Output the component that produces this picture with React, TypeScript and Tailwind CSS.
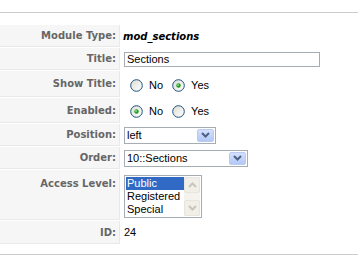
import React from "react";

const labelFont = { fontFamily: '"DejaVu Sans", Verdana, sans-serif' };

function Radio({ checked }: { checked?: boolean }) {
  return (
    <svg width="13" height="13" viewBox="0 0 13 13" className="shrink-0">
      <defs>
        <linearGradient id="rg" x1="0" y1="0" x2="1" y2="1">
          <stop offset="0" stopColor="#dcdcd5" />
          <stop offset="1" stopColor="#ffffff" />
        </linearGradient>
      </defs>
      <circle cx="6.5" cy="6.5" r="5.8" fill="url(#rg)" stroke="#1c5180" strokeWidth="1" />
      {checked && <circle cx="6.5" cy="6.5" r="2.2" fill="#21a121" />}
      {checked && <circle cx="6" cy="6" r="0.9" fill="#8ee08e" />}
    </svg>
  );
}

function DropButton() {
  return (
    <div className="w-[17px] h-full flex items-center justify-center rounded-[2px] border border-[#b9cbf5] bg-gradient-to-b from-[#d4e0fd] to-[#b3c8f6]">
      <svg width="9" height="6" viewBox="0 0 9 6">
        <path d="M1 1 L4.5 4.5 L8 1" fill="none" stroke="#4d6185" strokeWidth="2" />
      </svg>
    </div>
  );
}

function Select({ width, value }: { width: string; value: string }) {
  return (
    <div className={`${width} h-[17px] border border-[#a5acb2] bg-white flex items-stretch p-[1px]`}>
      <div className="flex-1 pl-[1px] leading-[13px] text-[11px] text-black">{value}</div>
      <DropButton />
    </div>
  );
}

function Row({ label, height, top, children }: { label: string; height: string; top?: boolean; children: React.ReactNode }) {
  return (
    <div className={`flex gap-[1px] ${height}`}>
      <div
        className={`w-[120px] shrink-0 bg-[#f6f6f6] border-b border-r border-[#e9e9e9] flex justify-end pr-[3px] text-[10px] font-bold text-[#666] ${top ? "items-start pt-[6px]" : "items-center"}`}
        style={labelFont}
      >
        {label}
      </div>
      <div className={`flex-1 pl-[3px] flex ${top ? "items-start pt-[5px]" : "items-center"}`}>{children}</div>
    </div>
  );
}

function RadioPair({ yes }: { yes: boolean }) {
  return (
    <div className="flex items-center text-[11px] text-black pl-[6px] pt-[2px]">
      <Radio checked={!yes} />
      <span className="ml-[6px] mr-[9px]">No</span>
      <Radio checked={yes} />
      <span className="ml-[6px]">Yes</span>
    </div>
  );
}

export default function App() {
  return (
    <div className="w-[358px] h-[263px] bg-white overflow-hidden" style={{ fontFamily: '"Liberation Sans", Arial, sans-serif' }}>
      <div className="h-[12px]" />
      <div className="border-t border-[#cccccc]" />
      <div className="mt-[12px] flex flex-col gap-[1px]">
        <Row label="Module Type:" height="h-[22px]">
          <span className="text-[10px] font-bold italic text-black -ml-[1px]" style={labelFont}>
            mod_sections
          </span>
        </Row>
        <Row label="Title:" height="h-[22px]">
          <div className="w-[196px] h-[15px] border border-[#a5acb2] bg-white text-[11px] leading-[13px] pl-[2px] text-black">
            Sections
          </div>
        </Row>
        <Row label="Show Title:" height="h-[26px]">
          <RadioPair yes={true} />
        </Row>
        <Row label="Enabled:" height="h-[25px]">
          <RadioPair yes={false} />
        </Row>
        <Row label="Position:" height="h-[22px]">
          <Select width="w-[92px]" value="left" />
        </Row>
        <Row label="Order:" height="h-[22px]">
          <Select width="w-[124px]" value="10::Sections" />
        </Row>
        <Row label="Access Level:" height="h-[50px]" top>
          <div className="w-[78px] h-[43px] border border-[#a5acb2] bg-white flex p-[1px]">
            <div className="flex-1 text-[11px] leading-[13px] text-black">
              <div className="bg-[#316ac5] text-white pl-[1px]">Public</div>
              <div className="pl-[1px]">Registered</div>
              <div className="pl-[1px]">Special</div>
            </div>
            <div className="w-[16px] bg-[#f4f3ee] flex flex-col justify-between">
              <div className="h-[16px] border border-[#e6e5de] rounded-[2px] bg-[#f0efe8] flex items-center justify-center">
                <svg width="9" height="6" viewBox="0 0 9 6">
                  <path d="M1 5 L4.5 1.5 L8 5" fill="none" stroke="#c9c7ba" strokeWidth="2" />
                </svg>
              </div>
              <div className="h-[16px] border border-[#e6e5de] rounded-[2px] bg-[#f0efe8] flex items-center justify-center">
                <svg width="9" height="6" viewBox="0 0 9 6">
                  <path d="M1 1 L4.5 4.5 L8 1" fill="none" stroke="#c9c7ba" strokeWidth="2" />
                </svg>
              </div>
            </div>
          </div>
        </Row>
        <Row label="ID:" height="h-[23px]">
          <span className="text-[11px] text-black">24</span>
        </Row>
      </div>
      <div className="mt-[10px] border-t border-[#cccccc]" />
    </div>
  );
}
